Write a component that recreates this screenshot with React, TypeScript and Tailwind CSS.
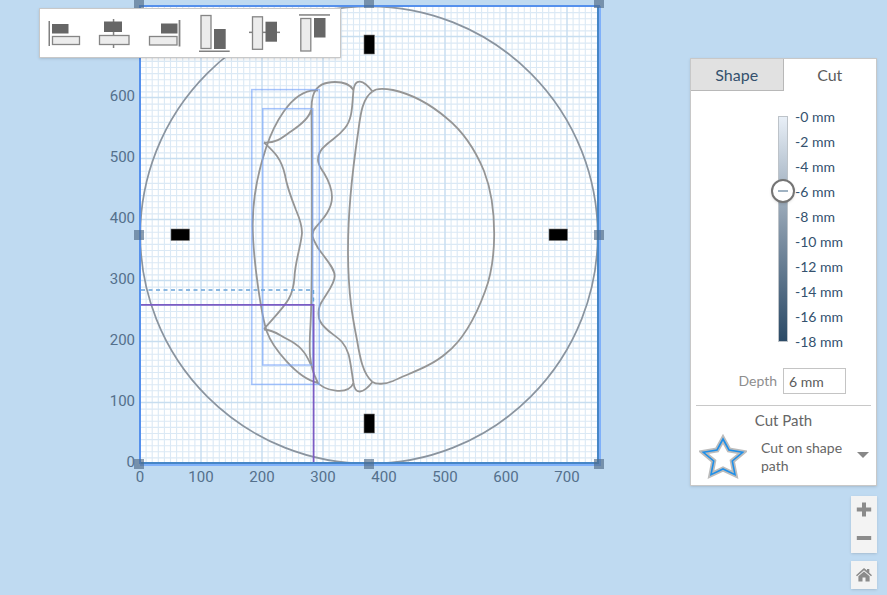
import { useState } from "react";

type Point = [number, number];

const LEFT = 140;
const TOP = 5;
const BOTTOM = 463;
const SIZE = 458;
const STEP = 6.1;

const minor = Array.from({ length: 75 }, (_, i) => i + 1).filter((i) => i % 10 !== 0);
const major = [1, 2, 3, 4, 5, 6, 7];

const curves = [
  // outer crescent
  "M318 90.5C290 88 272 130 266 148C258 172 252.7 200 252.7 225C253 262 262 318 267 332C272 346 296 378 318 383",
  // leaf at the top, wavy rib, leaf at the bottom
  "M311 110C309 120 296 128 290 132C281 139 275 143 264 142.5",
  "M264 142.5C272 150 281 157 285 175C287 187 292 200 296 210C302 224 302 229 302 233C301 246 295 262 294.5 277C293 299 286 304 264 329",
  "M264 329.5C275 330 280 336 287 339C299 345 305 351 311 365",
  // spine
  "M311.5 110C312 130 312 160 312 235C312 290 311.5 305 310.5 325C309 350 308.5 365 318 383",
  // second band
  "M311.5 115C311 100 311 82 335 82C344 82 350 84 353.5 90",
  "M353.5 90C352 104 353 118 345 128C338 137 332 139 326 145C321 149 318 154 318 160C318 165 322 170 324 173C330 183 332 190 332 197C332 210 322 220 316 227C314 229 312.5 232 312.5 235C312.5 239 316 244 318 248C325 258 334.7 268 334.7 276C334.7 285 325 295 320 305C318 310 318 317 320 321C325 331 336 335 342 342C350 351 350 362 353.5 383",
  "M316 381C324 391 348 396 353.5 383",
  // narrow band
  "M353.5 90C355 78 363 79 372.5 91.5",
  "M353.5 383C355 395 363 394 372.5 382",
  // large half moon
  "M372.5 91.5C376 88 385 88.5 393 90C411 94 430 104 446.5 118C465 133 477 154 484 171C491 189 494.3 210 494.2 235C494 255 491 276 485 291.5C476 316 463 340 446.5 353C432 366 410 373 393 381C385 384.5 376 384.5 372.5 382",
  "M372.5 91.5C361 99 360 120 358 133C354 160 348 205 348 250C348 295 353 320 357 340C360 358 363 374 372.5 382",
];

const tabs: Point[] = [[364, 35], [364, 414]];
const sideTabs: Point[] = [[171, 229], [549, 229]];
const handles: Point[] = [
  [139, 3], [369, 3], [599, 3], [139, 235], [599, 235], [139, 464], [369, 464], [599, 464],
];

function Canvas() {
  return (
    <svg width="640" height="500" viewBox="0 0 640 500" role="img" aria-label="Workpiece" className="block shrink-0">
      <rect x={LEFT} y={TOP} width={SIZE} height={BOTTOM - TOP} fill="#fff" />
      <g stroke="#dbe9f5" strokeWidth="1.1">
        {minor.map((i) => (
          <g key={i}>
            <line x1={LEFT + i * STEP} x2={LEFT + i * STEP} y1={TOP} y2={BOTTOM} />
            <line x1={LEFT} x2={LEFT + SIZE} y1={BOTTOM + 1 - i * STEP} y2={BOTTOM + 1 - i * STEP} />
          </g>
        ))}
      </g>
      <g stroke="#c8def0" strokeWidth="1.5">
        {major.map((i) => (
          <g key={i}>
            <line x1={LEFT + i * 61} x2={LEFT + i * 61} y1={TOP} y2={BOTTOM} />
            <line x1={LEFT} x2={LEFT + SIZE} y1={463.5 - i * 61} y2={463.5 - i * 61} />
          </g>
        ))}
      </g>
      <g fill="none" stroke="#959595" strokeWidth="1.8" strokeLinejoin="round">
        {curves.map((d) => (
          <path key={d} d={d} />
        ))}
      </g>
      <circle cx="369" cy="235" r="228.7" fill="none" stroke="#8a949f" strokeWidth="1.7" />
      <g fill="none" stroke="#76a3fb" strokeOpacity="0.65" strokeWidth="1.5">
        <rect x="251.8" y="89.6" width="67.5" height="294.8" />
        <rect x="262.8" y="108.7" width="50" height="256.3" />
      </g>
      <path d="M141 290H313.5V305" fill="none" stroke="#68a3d8" strokeWidth="1.4" strokeDasharray="4 3.5" />
      <path d="M141 304.8H313.6V462" fill="none" stroke="#7b5cc4" strokeWidth="1.8" />
      <path d="M140 465H600V6" fill="none" stroke="#7fb0fa" strokeWidth="2" />
      <path d="M140 463H598V6" fill="none" stroke="#4686c6" strokeWidth="2" />
      <path d="M140 464V6H600" fill="none" stroke="#5590ec" strokeWidth="2" />
      <g fill="#000" stroke="#777" strokeWidth="0.6">
        {tabs.map(([x, y]) => (
          <rect key={y} x={x} y={y} width="10.5" height="19" />
        ))}
        {sideTabs.map(([x, y]) => (
          <rect key={x} x={x} y={y} width="18.5" height="11.5" />
        ))}
      </g>
      <g fill="#4f6a87" fillOpacity="0.65">
        {handles.map(([x, y]) => (
          <rect key={`${x}-${y}`} x={x - 5} y={y - 5} width="10" height="10" />
        ))}
      </g>
      <g className="font-['Roboto',sans-serif] text-[15px]" fill="#54708c">
        {[0, 100, 200, 300, 400, 500, 600, 700].map((n) => (
          <text key={n} x={LEFT + n * 0.61} y="482" textAnchor="middle">
            {n}
          </text>
        ))}
        {[0, 100, 200, 300, 400, 500, 600].map((n) => (
          <text key={n} x="135" y={467 - n * 0.61} textAnchor="end">
            {n}
          </text>
        ))}
      </g>
    </svg>
  );
}

type Box = [number, number, number, number];
const alignTools: { label: string; line: Box; dark: Box; light: Box }[] = [
  { label: "Align left", line: [3.5, 8, 1.5, 25], dark: [7, 11, 16.5, 9.5], light: [7.5, 23.5, 27, 8] },
  { label: "Align center", line: [17.8, 6, 1.5, 29], dark: [9, 8.5, 18, 10.5], light: [4.5, 22.5, 29.5, 9] },
  { label: "Align right", line: [33.6, 7, 1.8, 26.5], dark: [16, 10.5, 16.5, 10], light: [4.5, 23.5, 27.5, 8.5] },
  { label: "Align bottom", line: [4, 37.5, 30.7, 1.5], dark: [19, 16, 11.7, 20], light: [6, 2.5, 10, 33] },
  { label: "Align middle", line: [4, 18.6, 31, 1.5], dark: [20.5, 8.7, 11.5, 20], light: [7.5, 3.8, 10, 32.5] },
  { label: "Align top", line: [4, 1.2, 31, 1.5], dark: [19, 5, 11.5, 19.5], light: [5.8, 5.5, 10, 32.5] },
];

function Shape({ box, ...rest }: { box: Box; fill: string; stroke?: string; strokeWidth?: number }) {
  return <rect x={box[0]} y={box[1]} width={box[2]} height={box[3]} {...rest} />;
}

function AlignToolbar() {
  return (
    <div role="toolbar" aria-label="Align" className="absolute top-2 left-[39px] flex border border-[#c8c8c8] bg-white shadow-sm">
      {alignTools.map((tool) => (
        <button key={tool.label} type="button" aria-label={tool.label} className="flex h-12 w-[50px] items-center justify-center">
          <svg width="40" height="40" viewBox="0 0 40 40" aria-hidden="true">
            <Shape box={tool.line} fill="#808080" />
            <Shape box={tool.light} fill="#ececec" stroke="#858585" strokeWidth={1.3} />
            <Shape box={tool.dark} fill="#666" />
          </svg>
        </button>
      ))}
    </div>
  );
}

const depths = [0, 2, 4, 6, 8, 10, 12, 14, 16, 18];

function CutPanel() {
  const [depth, setDepth] = useState(6);
  return (
    <section className="w-[187px] border border-[#c8c8c8] bg-white pb-[5px] text-[#666] shadow-sm">
      <div role="tablist" className="grid grid-cols-2 text-base text-[#34516e]">
        <button type="button" role="tab" aria-selected="false" className="h-8 border-r border-b border-[#b8b8b8] bg-[#e1e1e1]">
          Shape
        </button>
        <button type="button" role="tab" aria-selected="true" className="h-8 text-[#5c5c5c]">
          Cut
        </button>
      </div>
      <div className="mt-[13px] grid grid-cols-[80px_24px_1fr]">
        <div className="col-start-2 row-start-1 my-3 w-2.5 justify-self-center border border-[#bdc3c9] bg-linear-to-b from-[#e8eff7] via-[#8496a8] to-[#2b4a66]" />
        <input
          type="range"
          aria-label="Cut depth"
          min={0}
          max={18}
          value={depth}
          onChange={(e) => setDepth(Number(e.target.value))}
          className="col-start-2 row-start-1 h-[250px] w-6 appearance-none bg-transparent [writing-mode:vertical-lr] [&::-webkit-slider-thumb]:size-6 [&::-webkit-slider-thumb]:appearance-none [&::-webkit-slider-thumb]:rounded-full [&::-webkit-slider-thumb]:border-2 [&::-webkit-slider-thumb]:border-[#747474] [&::-webkit-slider-thumb]:bg-white [&::-webkit-slider-thumb]:bg-[linear-gradient(#9fb2c2,#9fb2c2)] [&::-webkit-slider-thumb]:bg-[length:10px_2px] [&::-webkit-slider-thumb]:bg-center [&::-webkit-slider-thumb]:bg-no-repeat [&::-webkit-slider-thumb]:shadow-sm"
        />
        <ul className="col-start-3 row-start-1 text-sm leading-[25px] text-[#34516e]">
          {depths.map((d) => (
            <li key={d}>-{d} mm</li>
          ))}
        </ul>
      </div>
      <div className="mt-[14px] flex items-center justify-end gap-1.5 pr-[30px] text-sm">
        <label htmlFor="depth" className="text-[#8e8e8e]">
          Depth
        </label>
        <input id="depth" type="text" defaultValue="6 mm" className="h-[26px] w-[63px] border border-[#c4c4c4] px-[5px] text-[#5c5c5c]" />
      </div>
      <div className="mx-[5px] mt-[11px] border-t border-[#c8c8c8] pt-1">
        <label htmlFor="cut-path" className="block text-center text-[15px] leading-5">
          Cut Path
        </label>
      </div>
      <div className="grid">
        <div aria-hidden="true" className="col-start-1 row-start-1 flex items-center px-2">
          <svg width="48" height="50" viewBox="699 432 48 50" className="shrink-0">
            <g fill="none" strokeLinejoin="miter">
              <path d="M723 441L729 452L742.7 454.3L732.3 463L735 476.7L723 471L711 476.7L713.7 463L703.3 454.3L717 452Z" stroke="#bcbcbc" strokeWidth="5" />
              <path d="M723 441L729 452L742.7 454.3L732.3 463L735 476.7L723 471L711 476.7L713.7 463L703.3 454.3L717 452Z" stroke="#1f8fe8" strokeWidth="1.6" />
            </g>
          </svg>
          <span className="ml-3.5 w-[90px] pt-1 text-sm leading-[18px]">Cut on shape path</span>
          <svg width="12" height="6" viewBox="0 0 12 6" className="ml-1.5 shrink-0">
            <path d="M0 0H12L6 6Z" fill="#888" />
          </svg>
        </div>
        <select id="cut-path" className="col-start-1 row-start-1 opacity-0">
          <option>Cut on shape path</option>
        </select>
      </div>
    </section>
  );
}

function ZoomControls() {
  return (
    <div className="mt-2.5 flex flex-col items-end gap-2">
      <div className="flex w-[26px] flex-col bg-[#f3f3f3] shadow-sm">
        <button type="button" aria-label="Zoom in" className="flex h-[27px] items-center justify-center">
          <svg width="16" height="16" viewBox="0 0 16 16" aria-hidden="true">
            <path d="M8 0.5V14.5M0.8 7.5H15.2" stroke="#8b8b8b" strokeWidth="4" />
          </svg>
        </button>
        <button type="button" aria-label="Zoom out" className="flex h-[30px] items-center justify-center">
          <svg width="16" height="16" viewBox="0 0 16 16" aria-hidden="true">
            <path d="M0.8 8H15.2" stroke="#8b8b8b" strokeWidth="4" />
          </svg>
        </button>
      </div>
      <button type="button" aria-label="Reset view" className="flex h-7 w-[26px] items-center justify-center bg-[#f3f3f3] shadow-sm">
        <svg width="16" height="14" viewBox="0 0 16 14" aria-hidden="true" fill="#8b8b8b">
          <path d="M8 0L11 2.6V1H13.3V4.7L16 7.2L15 8.3L8 2.2L1 8.3L0 7.2Z" />
          <path d="M8 3.4L13.6 8.3V13.5H9.5V9.6H6.5V13.5H2.4V8.3Z" />
        </svg>
      </button>
    </div>
  );
}

export default function App() {
  return (
    <main className="relative flex min-h-screen items-start justify-between bg-[#bfdaf1] font-['Lato',sans-serif]">
      <Canvas />
      <AlignToolbar />
      <aside className="pt-[58px] pr-2.5">
        <CutPanel />
        <ZoomControls />
      </aside>
    </main>
  );
}
